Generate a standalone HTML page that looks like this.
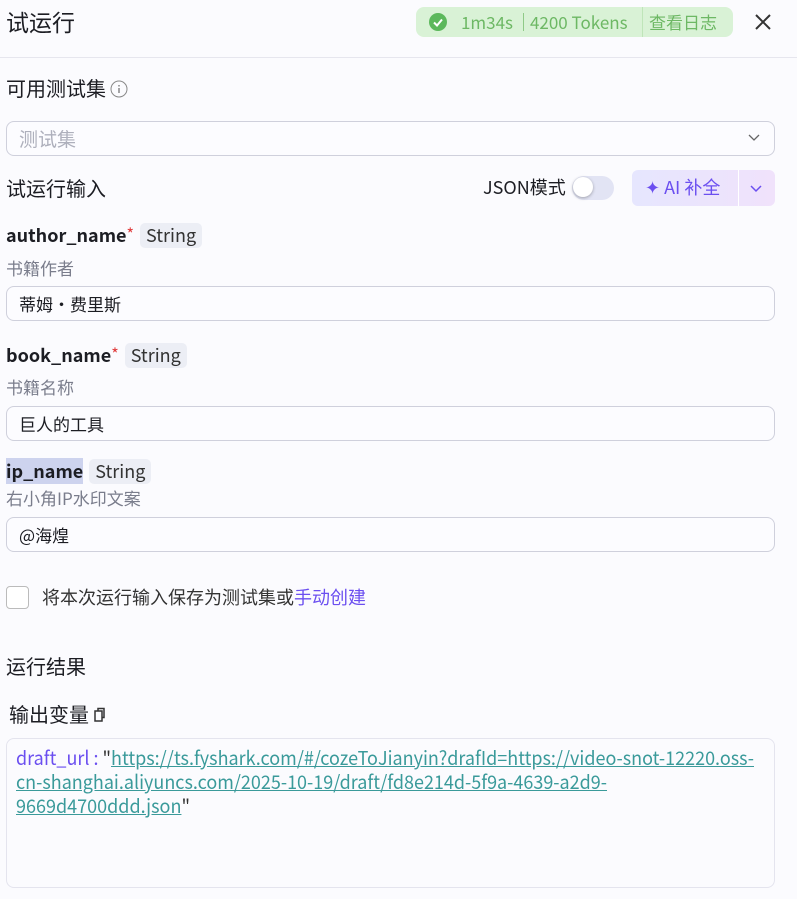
<!DOCTYPE html>
<html><head><meta charset="utf-8"><style>
*{box-sizing:border-box;margin:0;padding:0}
body{width:797px;height:899px;background:#fbfbfe;font-family:"Noto Sans CJK SC","Liberation Sans",sans-serif;color:#1c1d23;position:relative;overflow:hidden}
.a{position:absolute;white-space:nowrap;line-height:1.25}
.inp{position:absolute;left:6px;width:769px;height:35px;border:1px solid #cfd0dc;border-radius:8px;background:#fcfcff;font-size:17px;line-height:33px;padding:0 12px;color:#1c1d23}
.lbl{font-size:18px;font-weight:bold}
.tag{display:inline-block;background:#eceef5;border-radius:5px;padding:0 6px;font-size:18px;font-weight:normal;color:#333;margin-left:6px;line-height:25px}
.desc{font-size:17px;color:#7a7d8c}
.star{color:#e03b3b;font-weight:normal;vertical-align:top;font-size:16px}
.ln{position:absolute;left:16px;white-space:nowrap;font-size:19px;line-height:24px;transform-origin:0 50%}
.u{color:#3a9a9a;text-decoration:underline}
</style></head><body>
<div class="a" style="left:6px;top:7px;font-size:23px">试运行</div>
<div class="a" style="left:416px;top:7px;width:317px;height:30px;background:#d9f2d6;border-radius:8px;color:#6db864;font-size:17px;line-height:30px">
<svg style="position:absolute;left:13px;top:6px" width="18" height="18"><circle cx="9" cy="9" r="9" fill="#5cb85c"/><path d="M5 9.5l3 3 5-6" stroke="#fff" stroke-width="2" fill="none"/></svg>
<span style="position:absolute;left:45px">1m34s</span><span style="position:absolute;left:107px;top:6px;width:1px;height:18px;background:#8fca87"></span>
<span style="position:absolute;left:114px">4200 Tokens</span><span style="position:absolute;left:226px;top:0;width:1px;height:30px;background:#bfe5b9"></span>
<span style="position:absolute;left:233px">查看日志</span></div>
<svg class="a" style="left:753px;top:12px" width="20" height="20"><path d="M3 3l14 14M17 3L3 17" stroke="#333" stroke-width="2"/></svg>
<div class="a" style="left:0;top:57px;width:797px;height:1px;background:#e6e6ee"></div>
<div class="a" style="left:6px;top:75px;font-size:20px">可用测试集 <svg width="18" height="18" style="vertical-align:-2px"><circle cx="9" cy="9" r="8" stroke="#888" fill="none"/><path d="M9 8v5M9 5v1.5" stroke="#888" stroke-width="1.5"/></svg></div>
<div class="inp" style="top:121px;color:#aeb0bc;font-size:19px">测试集</div>
<svg class="a" style="left:748px;top:133px" width="12" height="10"><path d="M1 2l5 5 5-5" stroke="#666" fill="none" stroke-width="1.3"/></svg>
<div class="a" style="left:6px;top:175px;font-size:20px">试运行输入</div>
<div class="a" style="left:483px;top:176px;font-size:18px">JSON模式</div>
<div class="a" style="left:572px;top:176px;width:42px;height:24px;border-radius:12px;background:#e2e4f4"></div>
<div class="a" style="left:573px;top:177px;width:20px;height:20px;border-radius:50%;background:#fff;box-shadow:0 1px 3px rgba(0,0,0,.3)"></div>
<div class="a" style="left:632px;top:170px;width:143px;height:36px;border-radius:6px;background:linear-gradient(90deg,#e6e6fe,#f0e2fb)"></div>
<div class="a" style="left:738px;top:170px;width:1px;height:36px;background:#fff"></div>
<div class="a" style="left:645px;top:176px;font-size:18px;color:#6b4ff0">✦ AI 补全</div>
<svg class="a" style="left:750px;top:184px" width="12" height="10"><path d="M1 2l5 5 5-5" stroke="#6b4ff0" fill="none" stroke-width="1.5"/></svg>

<div class="a lbl" style="left:6px;top:223px">author_name<span class="star">*</span><span class="tag">String</span></div>
<div class="a desc" style="left:6px;top:257px">书籍作者</div>
<div class="inp" style="top:286px">蒂姆・费里斯</div>
<div class="a lbl" style="left:6px;top:343px">book_name<span class="star">*</span><span class="tag">String</span></div>
<div class="a desc" style="left:6px;top:376px">书籍名称</div>
<div class="inp" style="top:406px">巨人的工具</div>
<div class="a lbl" style="left:6px;top:459px"><span style="background:#cdd3ee">ip_name</span><span class="tag">String</span></div>
<div class="a desc" style="left:6px;top:487px">右小角IP水印文案</div>
<div class="inp" style="top:517px">@海煌</div>
<div class="a" style="left:6px;top:586px;width:23px;height:23px;border:1.5px solid #bbb;border-radius:4px;background:#fff"></div>
<div class="a" style="left:42px;top:586px;font-size:18px;color:#333">将本次运行输入保存为测试集或<span style="color:#6b4ff0">手动创建</span></div>
<div class="a" style="left:6px;top:653px;font-size:20px">运行结果</div>
<div class="a" style="left:9px;top:701px;font-size:20px">输出变量 <svg width="14" height="16" style="vertical-align:-1px"><rect x="2" y="4" width="7" height="10" stroke="#333" fill="none" stroke-width="1.5"/><path d="M5 4V1.5h6v9H9" stroke="#333" fill="none" stroke-width="1.5"/></svg></div>
<div class="a" style="left:6px;top:738px;width:769px;height:150px;border:1px solid #e4e4ee;border-radius:8px;background:#fbfbfe"></div>
<div class="ln" data-w="738" style="top:746px;color:#333"><span style="color:#6b4ff0">draft_url : </span>"<span class="u">https://ts.fyshark.com/#/cozeToJianyin?drafId=https://video-snot-12220.oss-</span></div>
<div class="ln" data-w="591" style="top:770px"><span class="u">cn-shanghai.aliyuncs.com/2025-10-19/draft/fd8e214d-5f9a-4639-a2d9-</span></div>
<div class="ln" data-w="174" style="top:794px;color:#333"><span class="u">9669d4700ddd.json</span>"</div>
<script>
document.querySelectorAll('.ln').forEach(function(e){var w=e.getBoundingClientRect().width;var t=+e.getAttribute('data-w');if(w>0)e.style.transform='scaleX('+(t/w)+')';});
</script>
</body></html>
